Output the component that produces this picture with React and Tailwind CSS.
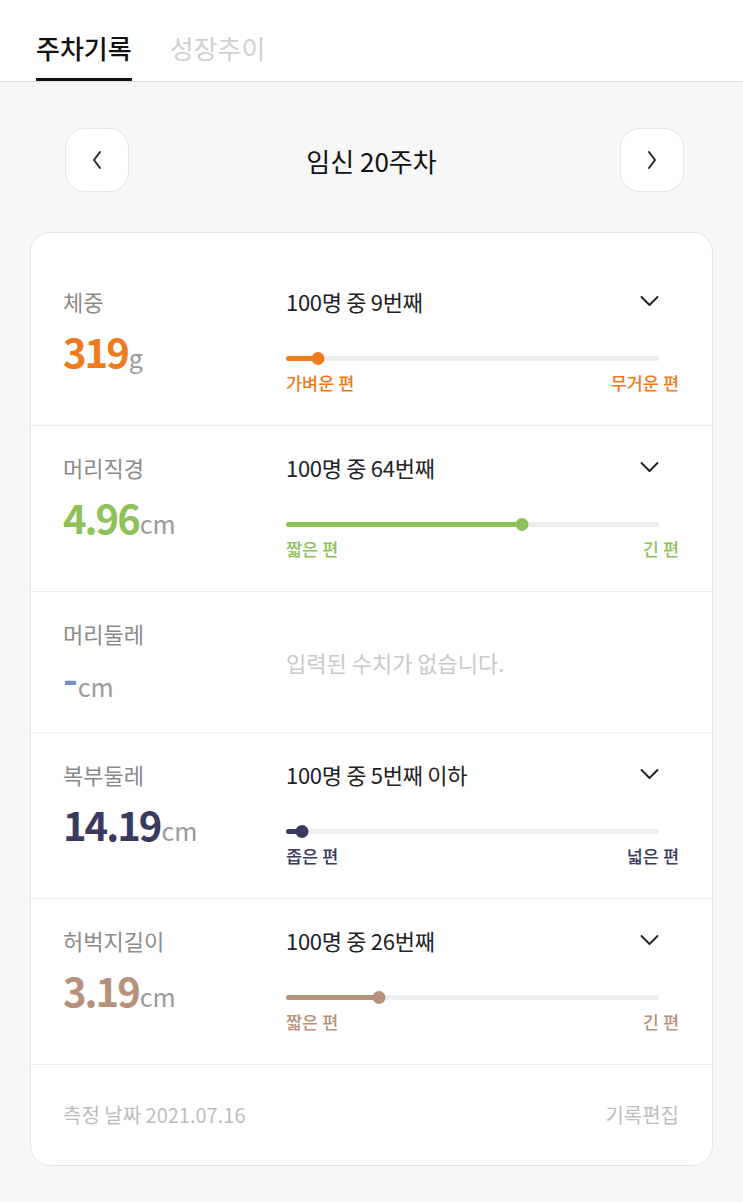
const FONT = { fontFamily: '"Noto Sans CJK KR", "Noto Sans", sans-serif' };

const ROWS = [
  {
    label: '체중', value: '319', unit: 'g', rank: '100명 중 9번째', pct: 8.6,
    left: '가벼운 편', right: '무거운 편',
    text: 'text-[#f07b1c]', bg: 'bg-[#f07b1c]',
  },
  {
    label: '머리직경', value: '4.96', unit: 'cm', rank: '100명 중 64번째', pct: 63.4,
    left: '짧은 편', right: '긴 편',
    text: 'text-[#8dc25a]', bg: 'bg-[#8dc25a]',
  },
  { label: '머리둘레', empty: true },
  {
    label: '복부둘레', value: '14.19', unit: 'cm', rank: '100명 중 5번째 이하', pct: 4.3,
    left: '좁은 편', right: '넓은 편',
    text: 'text-[#3a3960]', bg: 'bg-[#3a3960]',
  },
  {
    label: '허벅지길이', value: '3.19', unit: 'cm', rank: '100명 중 26번째', pct: 25,
    left: '짧은 편', right: '긴 편',
    text: 'text-[#b8917a]', bg: 'bg-[#b8917a]',
  },
];

function Chevron({ dir }) {
  const pts = { left: '9,2 3,10 9,18', right: '3,2 9,10 3,18', down: '2,3 10,11 18,3' }[dir];
  const size = dir === 'down' ? 'w-[21px] h-[14px]' : 'w-[12px] h-[20px]';
  const vb = dir === 'down' ? '0 0 20 14' : '0 0 12 20';
  return (
    <svg viewBox={vb} className={size} fill="none" stroke="#222" strokeWidth="1.9" strokeLinecap="round" strokeLinejoin="round">
      <polyline points={pts} />
    </svg>
  );
}

function Row({ r }) {
  if (r.empty) {
    return (
      <div className="flex pl-[32px] pt-[27px] pb-[27px] border-b border-[#ececec]">
        <div className="w-[223px] shrink-0">
          <p className="text-[22px] leading-[28px] text-[#8a8a8a]">{r.label}</p>
          <p className="mt-[14px] h-[44px] flex items-end leading-none">
            <span className="text-[40px] font-bold text-[#7393c6] leading-none mb-[8px]">-</span>
            <span className="text-[25px] text-[#9a9a9a] mb-[6px]">cm</span>
          </p>
        </div>
        <div className="flex-1 flex items-center">
          <p className="text-[22px] text-[#c9c9c9]">입력된 수치가 없습니다.</p>
        </div>
      </div>
    );
  }
  return (
    <div className="flex pl-[32px] pt-[27px] pb-[31px] border-b border-[#ececec]">
      <div className="w-[223px] shrink-0">
        <p className="text-[22px] leading-[28px] text-[#8a8a8a]">{r.label}</p>
        <p className="mt-[14px] h-[44px] flex items-baseline">
          <span className={`text-[40px] leading-[44px] font-bold tracking-[-2px] ${r.text}`}>{r.value}</span>
          <span className="text-[25px] text-[#9a9a9a] ml-[1px]">{r.unit}</span>
        </p>
      </div>
      <div className="flex-1 pr-[33px]">
        <div className="flex items-center justify-between h-[28px] pr-[19px]">
          <p className="text-[22px] text-[#222] tracking-[-0.3px]">{r.rank}</p>
          <Chevron dir="down" />
        </div>
        <div className="mt-[37px] mr-[20px] h-[12px] relative flex items-center">
          <div className="w-full h-[5px] rounded-full bg-[#ededed]" />
          <div className={`absolute left-0 h-[5px] rounded-full ${r.bg}`} style={{ width: `${r.pct}%` }} />
          <div className={`absolute w-[13px] h-[13px] rounded-full -translate-x-1/2 ${r.bg}`} style={{ left: `${r.pct}%` }} />
        </div>
        <div className={`mt-[8px] flex justify-between text-[17.5px] leading-[22px] font-medium ${r.text}`}>
          <span>{r.left}</span>
          <span>{r.right}</span>
        </div>
      </div>
    </div>
  );
}

export default function App() {
  return (
    <div className="min-h-[1202px] bg-[#f7f7f7]" style={FONT}>
      <div className="bg-white h-[82px] border-b border-[#dedede] flex items-end px-[36px] gap-[38px]">
        <div className="flex flex-col items-center">
          <span className="text-[26px] leading-[30px] font-medium text-[#111] mb-[15px]">주차기록</span>
          <div className="h-[3px] w-full bg-[#111]" />
        </div>
        <span className="text-[26px] leading-[30px] text-[#d0d0d0] mb-[18px]">성장추이</span>
      </div>

      <div className="mt-[46px] pl-[65px] pr-[59px] flex items-center justify-between">
        <button className="w-[64px] h-[64px] rounded-[20px] bg-white border border-[#e6e6e6] flex items-center justify-center">
          <Chevron dir="left" />
        </button>
        <p className="text-[26px] text-[#111] mr-[6px]">임신 20주차</p>
        <button className="w-[64px] h-[64px] rounded-[20px] bg-white border border-[#e6e6e6] flex items-center justify-center">
          <Chevron dir="right" />
        </button>
      </div>

      <div className="mx-[30px] mt-[40px] bg-white rounded-[20px] border border-[#e4e4e4] pt-[27px]">
        {ROWS.map((r) => <Row key={r.label} r={r} />)}
        <div className="flex justify-between items-center pl-[32px] pr-[33px] h-[100px] text-[20px] text-[#bdbdbd]">
          <span>측정 날짜 2021.07.16</span>
          <span>기록편집</span>
        </div>
      </div>
    </div>
  );
}
